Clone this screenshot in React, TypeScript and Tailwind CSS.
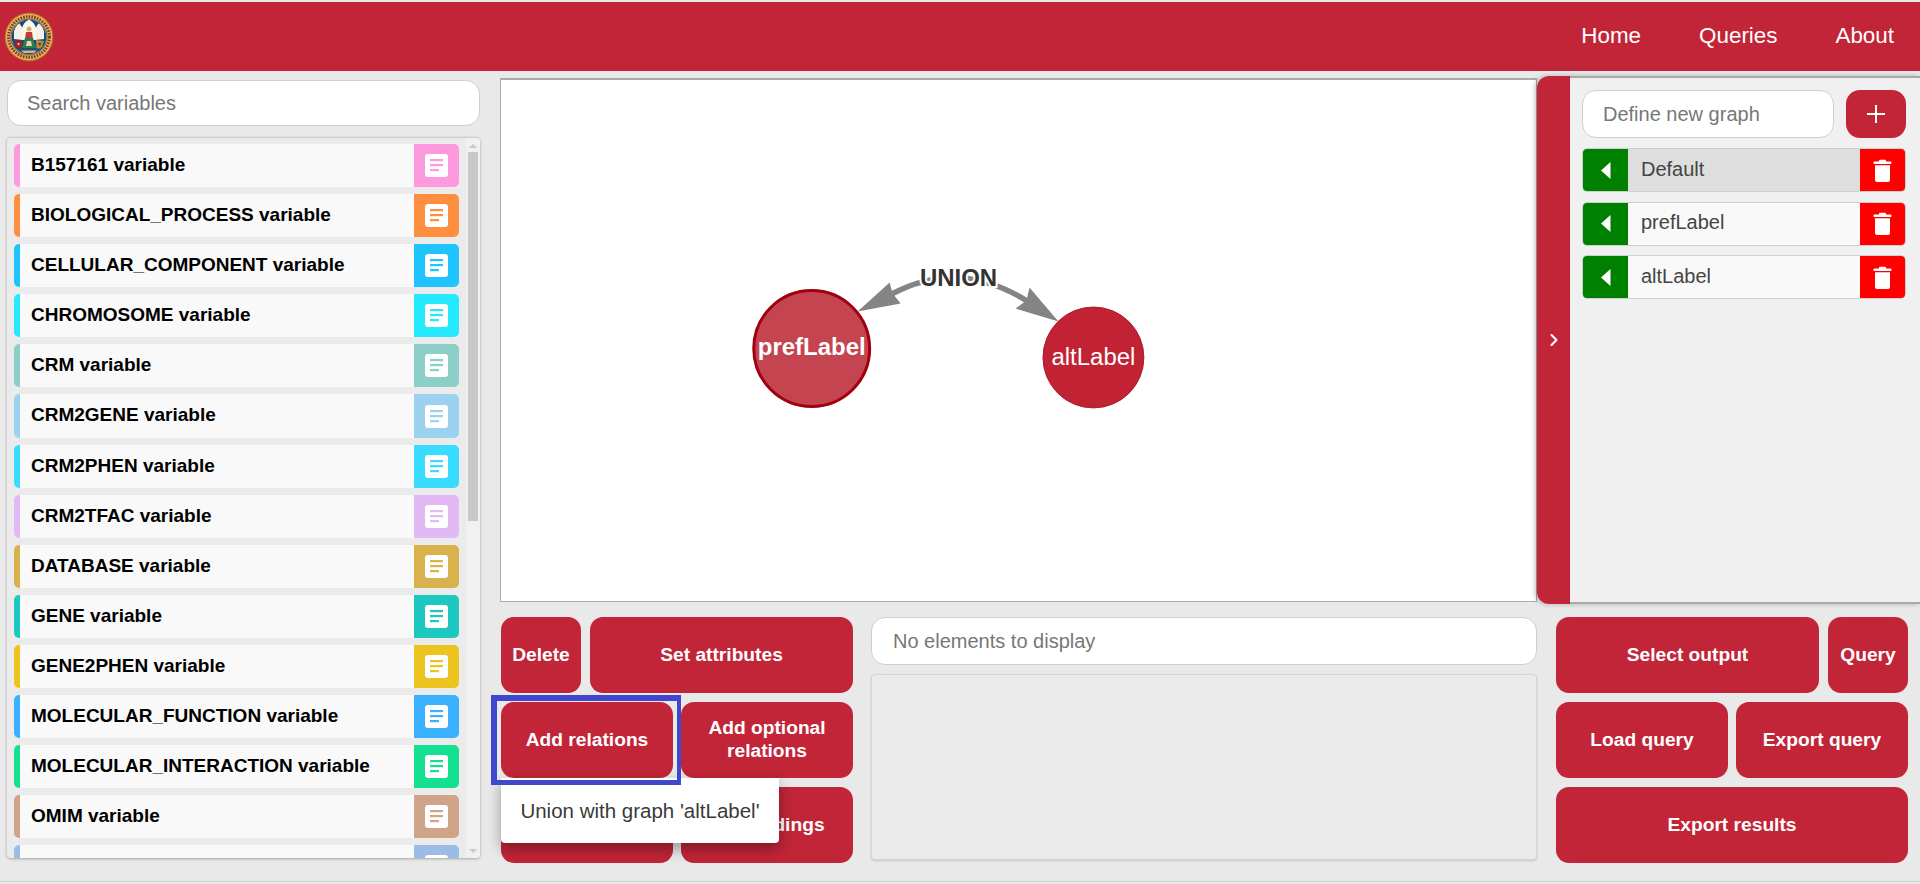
import React from "react";
import { ChevronRight } from "lucide-react";

const items = [
  { name: "B157161", bg: "bg-[#fd99df]", fg: "text-[#fd99df]" },
  { name: "BIOLOGICAL_PROCESS", bg: "bg-[#ff8f40]", fg: "text-[#ff8f40]" },
  { name: "CELLULAR_COMPONENT", bg: "bg-[#1fc4ff]", fg: "text-[#1fc4ff]" },
  { name: "CHROMOSOME", bg: "bg-[#24e9ff]", fg: "text-[#24e9ff]" },
  { name: "CRM", bg: "bg-[#8ccfc8]", fg: "text-[#8ccfc8]" },
  { name: "CRM2GENE", bg: "bg-[#9dd1f0]", fg: "text-[#9dd1f0]" },
  { name: "CRM2PHEN", bg: "bg-[#38dcff]", fg: "text-[#38dcff]" },
  { name: "CRM2TFAC", bg: "bg-[#e2b8f5]", fg: "text-[#e2b8f5]" },
  { name: "DATABASE", bg: "bg-[#d9b24e]", fg: "text-[#d9b24e]" },
  { name: "GENE", bg: "bg-[#1cc8c0]", fg: "text-[#1cc8c0]" },
  { name: "GENE2PHEN", bg: "bg-[#ecc31f]", fg: "text-[#ecc31f]" },
  { name: "MOLECULAR_FUNCTION", bg: "bg-[#3bb0ff]", fg: "text-[#3bb0ff]" },
  { name: "MOLECULAR_INTERACTION", bg: "bg-[#15e090]", fg: "text-[#15e090]" },
  { name: "OMIM", bg: "bg-[#cfa488]", fg: "text-[#cfa488]" },
  { name: "", bg: "bg-[#9cbce8]", fg: "text-[#9cbce8]" },
];

function Logo() {
  return (
    <svg width="50" height="50" viewBox="0 0 50 50">
      <circle cx="25" cy="25" r="24.4" fill="#b5702c" />
      <circle cx="25" cy="25" r="23.2" fill="#eeb063" />
      <circle cx="25" cy="25" r="20.4" fill="none" stroke="#6a4420" strokeWidth="3" strokeDasharray="1.6 1.2" />
      <circle cx="25" cy="25" r="18" fill="#f0e8d4" stroke="#5a3a1c" strokeWidth="0.8" />
      <path d="M7.6 25 A17.4 17.4 0 0 1 42.4 25 A17.4 17.4 0 0 1 7.6 25 Z" fill="#174f7c" />
      <path d="M10 27 V19 Q12 13 15.5 11.5 Q18 14 19 19 V28 Z" fill="#f5f1e6" />
      <path d="M40 27 V19 Q38 13 34.5 11.5 Q32 14 31 19 V28 Z" fill="#f5f1e6" />
      <path d="M18 28 V16 Q20 10 25 7.6 Q30 10 32 16 V28 Z" fill="#fbf7ec" />
      <circle cx="25" cy="17" r="2.5" fill="#d8a878" />
      <path d="M22 20 H28 L29 27 H21 Z" fill="#c23a3a" />
      <path d="M21 26 H29 L32 36 H18 Z" fill="#2f7a52" />
      <path d="M23 29 H27 L28 34 H22 Z" fill="#e8d8a8" />
      <path d="M10 29 L18 28 L17.5 36 Q14 38 11.5 34 Z" fill="#9e2028" />
      <path d="M13 31 L15.5 31 L15 34 Z" fill="#f0d8a0" />
      <path d="M40 29 L32 28 L32.5 36 Q36 38 38.5 34 Z" fill="#b88a34" />
      <path d="M34 31 L37 31 L36 34 Z" fill="#6a2018" />
      <path d="M17 38.5 H33 L30 41 H20 Z" fill="#e8b060" />
    </svg>
  );
}

function NoteIcon({ fg }: { fg: string }) {
  return (
    <svg width="23" height="23" viewBox="0 0 23 23" className={fg}>
      <rect width="23" height="23" rx="3" fill="#fff" />
      <rect x="5" y="5" width="13" height="2.2" fill="currentColor" />
      <rect x="5" y="10" width="13" height="2.2" fill="currentColor" />
      <rect x="5" y="15" width="9" height="2.2" fill="currentColor" />
    </svg>
  );
}

function TrashIcon() {
  return (
    <svg width="19" height="23" viewBox="0 0 19 23">
      <rect x="0.5" y="2.6" width="18" height="2.4" rx="0.8" fill="#fff" />
      <rect x="6" y="0.8" width="7" height="3" rx="1" fill="#fff" />
      <path d="M2 6.2 H17 V21 Q17 23 15 23 H4 Q2 23 2 21 Z" fill="#fff" />
    </svg>
  );
}

function Btn({ className, children }: { className: string; children: React.ReactNode }) {
  return (
    <div className={`flex h-[76px] items-center justify-center rounded-[13px] bg-[#c12537] pb-[2px] text-center text-[19.2px] font-bold leading-[23px] text-white ${className}`}>
      {children}
    </div>
  );
}

function GraphRow({ label, active }: { label: string; active?: boolean }) {
  return (
    <div className="flex h-[44px] overflow-hidden rounded-[5px] border border-[#cfcfcf]">
      <div className="flex w-[45px] items-center justify-center bg-[#008000]">
        <svg width="10" height="17" viewBox="0 0 10 17"><path d="M9.5 0 V17 L0 8.5 Z" fill="#fff" /></svg>
      </div>
      <div className={`flex flex-1 items-center pb-[3px] pl-[13px] text-[20px] text-[#444] ${active ? "bg-[#dedede]" : "bg-[#f9f9f9]"}`}>{label}</div>
      <div className="flex w-[45px] items-center justify-center bg-[#ff0000]"><TrashIcon /></div>
    </div>
  );
}

export default function App() {
  return (
    <div className="h-[884px] w-full overflow-hidden bg-[#e9e9e9] pt-[2px] font-['Liberation_Sans',Arial,sans-serif]">
      <header className="flex h-[69px] items-center bg-[#c12537] pl-[4px] pr-[26px] text-white">
        <Logo />
        <nav className="ml-auto flex gap-[58px] pb-[1px] text-[22.4px]">
          <span>Home</span>
          <span>Queries</span>
          <span>About</span>
        </nav>
      </header>

      <div className="flex h-[811px] border-b border-[#d2d2d2] pl-[6px]">
        <aside className="ml-[1px] mt-[9px] w-[473px]">
          <div className="flex h-[46px] items-center rounded-[14px] border border-[#cfcfcf] bg-white pb-[1px] pl-[19px] text-[20px] text-[#777]">Search variables</div>
          <div className="mt-[11px] flex h-[721px] overflow-hidden rounded-[4px] border-t border-[#cfcfcf] bg-[#ebebeb] shadow-[0_1px_3px_rgba(0,0,0,0.3)]">
            <div className="flex min-w-0 flex-1 flex-col gap-[7px] pl-[7px] pr-[7px] pt-[6px]">
              {items.map((it) => (
                <div key={it.name} className="flex h-[43.1px] shrink-0 overflow-hidden rounded-[5px] bg-[#f9f9f9]">
                  <div className={`w-[6px] ${it.bg}`} />
                  <div className="flex-1 pl-[11px] pt-[9px] text-[19px] font-bold leading-[23px] text-black">{it.name ? `${it.name} variable` : ""}</div>
                  <div className={`flex w-[45px] items-center justify-center ${it.bg}`}><NoteIcon fg={it.fg} /></div>
                </div>
              ))}
            </div>
            <div className="flex w-[14px] shrink-0 flex-col items-center bg-[#f1f1f1] pb-[5px] pt-[6px]">
              <div className="h-0 w-0 border-x-[4px] border-b-[4px] border-x-transparent border-b-[#c8c8c8]" />
              <div className="mt-[4px] h-[369px] w-[10px] bg-[#c8c8c8]" />
              <div className="mt-auto h-0 w-0 border-x-[4px] border-t-[4px] border-x-transparent border-t-[#c8c8c8]" />
            </div>
          </div>
        </aside>

        <main className="ml-[20px] mt-[5px] flex-1">
          <div className="flex h-[528px]">
            <div className="my-[2px] flex-1 border border-t-2 border-[#aaa] bg-white">
              <svg width="100%" height="100%" viewBox="501 80 1036 520">
                <path d="M893 293 Q959 258 1027 300" fill="none" stroke="#848484" strokeWidth="5.5" />
                <polygon points="858,311 890,282 893,293 901,303" fill="#848484" />
                <polygon points="1059,321 1030,287 1027,300 1016,308" fill="#848484" />
                <circle cx="812" cy="348" r="58" fill="#c4444f" stroke="#a00010" strokeWidth="3" />
                <circle cx="1094" cy="357" r="50.5" fill="#c12335" stroke="#a81c2d" strokeWidth="1" />
                <text x="812" y="355" textAnchor="middle" fontSize="24" fontWeight="bold" fill="#fff">prefLabel</text>
                <text x="1094" y="365" textAnchor="middle" fontSize="24" fill="#fff">altLabel</text>
                <text x="959" y="285" textAnchor="middle" fontSize="24" fontWeight="bold" fill="#333" stroke="#fff" strokeWidth="4" paintOrder="stroke">UNION</text>
              </svg>
            </div>
            <div className="flex w-[383px] shrink-0 overflow-hidden rounded-l-[12px] shadow-[-2px_0_5px_rgba(0,0,0,0.25)]">
              <div className="flex w-[33px] items-center justify-center bg-[#c12537] text-white"><ChevronRight size={20} strokeWidth={2.5} /></div>
              <div className="flex-1 border-y-2 border-[#aaa] bg-[#f0f0f0] pl-[12px] pr-[14px] pt-[12px]">
                <div className="flex gap-[12px]">
                  <div className="flex h-[48px] w-[252px] items-center rounded-[14px] border border-[#cfcfcf] bg-white pl-[20px] text-[20px] text-[#777]">Define new graph</div>
                  <div className="flex h-[48px] flex-1 items-center justify-center rounded-[14px] bg-[#c12537]">
                    <svg width="18" height="18" viewBox="0 0 18 18"><path d="M9 0 V18 M0 9 H18" stroke="#fff" strokeWidth="2" /></svg>
                  </div>
                </div>
                <div className="mt-[10px] flex flex-col gap-[9.5px]">
                  <GraphRow label="Default" active />
                  <GraphRow label="prefLabel" />
                  <GraphRow label="altLabel" />
                </div>
              </div>
            </div>
          </div>

          <div className="mt-[13px] flex pl-[1px]">
            <div className="relative flex w-[352px] shrink-0 flex-col gap-[9px]">
              <div className="flex gap-[9px]">
                <Btn className="w-[80px]">Delete</Btn>
                <Btn className="flex-1">Set attributes</Btn>
              </div>
              <div className="flex gap-[8px]">
                <Btn className="flex-1">Add relations</Btn>
                <Btn className="flex-1">Add optional<br />relations</Btn>
              </div>
              <div className="flex gap-[8px]">
                <Btn className="flex-1">{""}</Btn>
                <Btn className="flex-1">Set bindings</Btn>
              </div>
              <div className="absolute left-0 top-[161px] flex h-[65px] w-[278px] items-center justify-center rounded-b-[4px] bg-white pt-[1px] text-[20.5px] text-[#3a3a3a] shadow-[0_6px_14px_rgba(0,0,0,0.35)]">Union with graph 'altLabel'</div>
              <div className="pointer-events-none absolute left-[-10px] top-[78px] h-[90px] w-[190px] border-b-[5px] border-l-[6px] border-r-[4px] border-t-[6px] border-[#3f48cc]" />
            </div>

            <div className="ml-[18px] w-[666px] shrink-0">
              <div className="flex h-[48px] items-center rounded-[14px] border border-[#cfcfcf] bg-white pl-[21px] text-[20px] text-[#777]">No elements to display</div>
              <div className="mt-[9px] h-[186px] rounded-[4px] border border-[#d4d4d4] bg-[#eaeaea] shadow-[0_1px_2px_rgba(0,0,0,0.15)]" />
            </div>

            <div className="ml-[19px] flex w-[352px] shrink-0 flex-col gap-[9px]">
              <div className="flex gap-[9px]">
                <Btn className="flex-1">Select output</Btn>
                <Btn className="w-[80px]">Query</Btn>
              </div>
              <div className="flex gap-[8px]">
                <Btn className="flex-1">Load query</Btn>
                <Btn className="flex-1">Export query</Btn>
              </div>
              <Btn className="w-full">Export results</Btn>
            </div>
          </div>
        </main>
      </div>
    </div>
  );
}
